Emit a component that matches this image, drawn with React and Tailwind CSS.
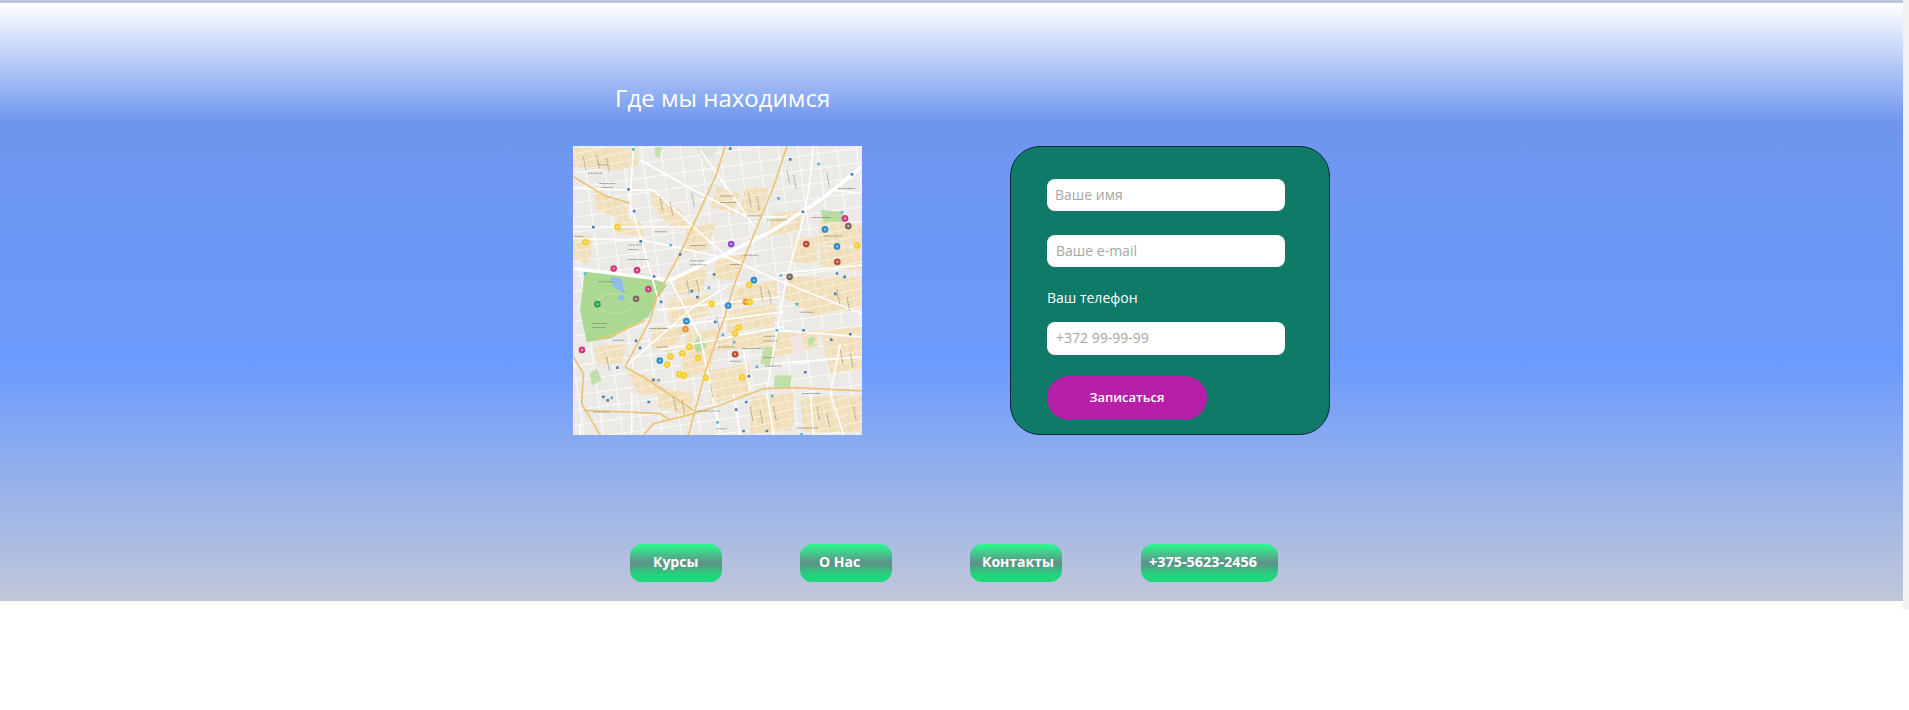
import React from "react";

const font = { fontFamily: '"Open Sans", sans-serif' };

// map coordinates follow a 866 unit square, offset by 39/48
const blocks = [
  "40,55 235,55 235,105 170,120 40,110",
  "100,180 200,225 205,275 110,240",
  "170,265 240,270 250,320 170,310",
  "40,310 95,320 90,400 40,390",
  "270,180 360,240 395,300 330,290 280,230",
  "470,170 540,190 520,250 450,230",
  "555,170 625,175 600,265 535,255",
  "640,250 730,240 720,300 620,320",
  "380,295 470,275 440,360 370,370",
  "470,385 555,370 530,450 455,445",
  "350,430 440,405 430,480 340,500",
  "700,320 775,320 770,400 695,395",
  "780,270 905,285 905,345 775,345",
  "780,350 905,355 905,420 780,410",
  "680,440 905,440 905,530 760,560 670,500",
  "530,470 650,450 650,510 515,530",
  "510,540 650,520 640,590 495,610",
  "320,510 450,490 440,560 330,580",
  "280,590 380,590 330,670 270,650",
  "380,600 480,600 450,720 360,750",
  "475,620 640,600 630,650 470,660",
  "640,610 780,600 770,650 640,680",
  "780,600 905,590 905,720 810,730",
  "200,720 290,745 330,800 230,790",
  "300,770 400,790 390,860 290,830",
  "450,720 570,700 570,790 450,820",
  "570,800 700,785 700,900 570,910",
  "720,800 905,795 905,905 730,905",
  "100,650 200,640 185,700 110,700",
];

const whiteRoads = [
  "905,110 780,210 640,300 500,370 330,450 40,415",
  "220,48 210,220 250,350 295,510",
  "40,290 200,290 390,290",
  "40,175 220,180 280,180 400,290 500,380 640,445 905,550",
  "760,48 745,180 720,300 680,440 650,600 620,780",
  "40,325 250,330 500,385",
  "330,450 420,620 480,914",
  "290,540 660,500",
  "320,590 670,545",
  "300,660 670,590",
  "195,710 400,530 500,470",
  "650,430 905,405",
  "650,600 905,620",
  "640,700 905,680",
  "550,660 570,780",
  "240,90 400,180 560,260 680,260",
  "420,60 470,130 590,300",
  "820,180 905,190",
  "60,880 60,914",
  "215,790 215,914",
  "520,790 540,914",
  "620,790 640,914",
  "750,790 760,914",
  "840,640 810,790 850,914",
];

const orangeRoads = [
  "495,48 470,130 420,240 360,370 290,500 270,570 195,710",
  "680,48 640,170 570,340 520,470 490,570 440,710 405,840 385,914",
  "905,782 700,772 610,775 480,825 400,850 280,880 250,914",
  "40,140 90,170 130,195 210,220",
  "40,680 70,730 65,820 100,880 120,914",
  "70,840 200,845 300,850 330,870",
  "195,710 250,740 400,840",
  "110,630 170,610 255,570",
];

const parks = [
  { points: "75,420 270,435 320,465 290,510 265,560 150,625 80,635 60,540", fill: "#acd992" },
  { points: "610,650 640,650 640,710 600,700", fill: "#c4dda8" },
  { points: "420,615 440,650 410,670 400,640", fill: "#b7dba0" },
  { points: "780,240 845,245 850,275 790,275", fill: "#b7dba0" },
  { points: "90,730 110,715 125,750 95,765", fill: "#bfe0a8" },
  { points: "645,735 695,735 690,770 640,770", fill: "#bfe0a8" },
  { points: "745,620 765,620 760,645 742,645", fill: "#bfe0a8" },
  { points: "285,50 305,50 300,80 285,80", fill: "#c5e0ae" },
  { points: "410,55 470,55 455,85 425,85", fill: "#dfe6d8" },
  { points: "695,620 720,605 735,660 700,670", fill: "#f2e4e4" },
];

const pins = [
  [172, 291, "#f7cf31"], [76, 336, "#f7cf31"], [513, 342, "#8a4fc0"], [854, 265, "#cf3d7e"],
  [864, 288, "#7b6a5e"], [794, 298, "#2b8fd0"], [738, 342, "#c04a3a"], [830, 349, "#2b8fd0"],
  [891, 346, "#f7cf31"], [831, 395, "#c04a3a"], [688, 440, "#7b6a5e"], [581, 450, "#2b8fd0"],
  [567, 464, "#f7cf31"], [161, 415, "#cf3d7e"], [231, 420, "#cf3d7e"], [265, 477, "#cf3d7e"],
  [228, 506, "#7b6a5e"], [112, 522, "#2f9e5a"], [455, 521, "#f7cf31"], [504, 526, "#2b8fd0"],
  [557, 515, "#ee9a2e"], [569, 516, "#f7cf31"], [379, 573, "#2b8fd0"], [376, 597, "#ee9a2e"],
  [534, 592, "#f7cf31"], [525, 610, "#f7cf31"], [66, 659, "#cf3d7e"], [525, 672, "#b5503c"],
  [388, 650, "#f7cf31"], [366, 669, "#f7cf31"], [331, 679, "#f7cf31"], [414, 683, "#f7cf31"],
  [299, 691, "#2b8fd0"], [321, 703, "#f7cf31"], [358, 732, "#f7cf31"], [371, 736, "#f7cf31"],
  [437, 742, "#f7cf31"], [546, 741, "#f7cf31"],
];

const stops = [
  [220, 58], [510, 56], [690, 88], [775, 102], [875, 133], [205, 178], [655, 205], [222, 243],
  [728, 245], [845, 247], [100, 291], [242, 334], [332, 345], [360, 373], [830, 430], [75, 431],
  [282, 439], [462, 433], [662, 436], [853, 440], [395, 483], [446, 473], [412, 501], [303, 515],
  [710, 522], [825, 491], [465, 575], [650, 600], [730, 600], [870, 612], [488, 614], [228, 632],
  [240, 653], [522, 636], [813, 628], [172, 712], [590, 710], [735, 726], [280, 749], [296, 750],
  [566, 738], [130, 800], [155, 803], [143, 810], [266, 815], [636, 797], [558, 815], [528, 838],
  [472, 876], [550, 902], [620, 902], [724, 912],
];

const labels = [
  [85, 130, 40], [118, 160, 50], [125, 172, 35], [205, 345, 40], [205, 358, 30], [205, 388, 60],
  [115, 455, 45], [95, 580, 50], [95, 592, 40], [285, 305, 35], [480, 198, 40], [480, 217, 50],
  [560, 258, 45], [620, 270, 60], [390, 346, 45], [390, 392, 40], [390, 404, 50], [550, 375, 45],
  [510, 403, 30], [835, 175, 50], [755, 262, 55], [790, 318, 55], [720, 546, 40], [475, 650, 50],
  [545, 655, 60], [510, 693, 35], [610, 618, 35], [610, 632, 45], [615, 708, 50], [725, 790, 55],
  [270, 595, 55], [290, 650, 35], [410, 842, 70], [100, 845, 50], [470, 895, 30], [710, 893, 65],
  [115, 105, 30], [45, 320, 25], [160, 630, 35], [610, 682, 30],
];

// small street names running along the blocks, drawn on a slant
const slantLabels = [
  [70, 80], [110, 75], [140, 85], [300, 200], [330, 215], [395, 190], [565, 190], [590, 200],
  [680, 120], [700, 135], [800, 130], [380, 450], [410, 450], [600, 470], [625, 480], [470, 560],
  [830, 480], [860, 500], [570, 830], [600, 840], [640, 830], [770, 830], [800, 850], [880, 830],
  [340, 800], [365, 810], [140, 680], [840, 660], [870, 670], [450, 760],
];

function MapPicture() {
  return (
    <svg viewBox="39 48 866 866" className="w-[289px] h-[289px] shrink-0 blur-[0.45px]">
      <defs>
        <pattern id="hatch" width="26" height="26" patternUnits="userSpaceOnUse" patternTransform="rotate(-12)">
          <rect width="26" height="26" fill="#f0dfba" />
          <rect width="26" height="3" fill="#f9f2e2" />
          <rect width="3" height="26" fill="#f6ead0" />
        </pattern>
        <pattern id="streets" width="58" height="44" patternUnits="userSpaceOnUse" patternTransform="rotate(-8)">
          <rect width="58" height="44" fill="#ebeae7" />
          <rect width="58" height="3" fill="#fbfbfa" />
          <rect width="3" height="44" fill="#fbfbfa" />
        </pattern>
      </defs>
      <rect x="39" y="48" width="866" height="866" fill="url(#streets)" />
      {blocks.map((p, i) => (
        <polygon key={i} points={p} fill="url(#hatch)" />
      ))}
      {parks.map((p, i) => (
        <polygon key={i} points={p.points} fill={p.fill} />
      ))}
      <path d="M150 440 L185 445 L195 490 L178 482 L160 470 Z" fill="#8fbce8" />
      <circle cx="184" cy="503" r="9" fill="#8fbce8" />
      <ellipse cx="165" cy="520" rx="55" ry="30" fill="none" stroke="#c6e6b4" strokeWidth="2" />
      {whiteRoads.map((p, i) => (
        <polyline key={i} points={p} fill="none" stroke="#ffffff" strokeWidth={i < 1 ? 11 : 5} />
      ))}
      {orangeRoads.map((p, i) => (
        <polyline key={i} points={p} fill="none" stroke="#edc47a" strokeWidth="5" />
      ))}
      {labels.map(([x, y, w], i) => (
        <line key={i} x1={x} y1={y} x2={x + w} y2={y} stroke="#77776f" strokeWidth="3" strokeDasharray="5 2" opacity="0.75" />
      ))}
      {slantLabels.map(([x, y], i) => (
        <line key={i} x1={x} y1={y} x2={x + 8} y2={y + 42} stroke="#77776f" strokeWidth="3" strokeDasharray="5 2" opacity="0.6" />
      ))}
      {stops.map(([x, y], i) => (
        <rect key={i} x={x - 4} y={y - 4} width="8" height="8" rx="1" fill={i % 3 === 0 ? "#55b6dc" : "#4f7fb8"} />
      ))}
      {pins.map(([x, y, c], i) => (
        <g key={i}>
          <circle cx={x} cy={y} r="10" fill={c} />
          <circle cx={x} cy={y} r="3" fill="#ffffff" opacity="0.65" />
        </g>
      ))}
    </svg>
  );
}

const navItems = [
  { label: "Курсы", className: "w-[92px] pl-[23px] pb-[4px] text-[14px]" },
  { label: "О Нас", className: "w-[92px] pl-[19px] pb-[4px] text-[14px]" },
  { label: "Контакты", className: "w-[92px] pl-[12px] pb-[4px] text-[14px]" },
  { label: "+375-5623-2456", className: "w-[137px] pl-[8px] pb-[2px] ml-px text-[14.4px]" },
];

const inputClass =
  "block w-[238px] bg-white rounded-[8px] text-[14px] text-gray-700 outline-none placeholder:text-[#a6a6a6]";

export default function App() {
  return (
    <div className="flex h-[710px] bg-white overflow-hidden" style={font}>
      <div className="w-[1903px] shrink-0">
        <section className="h-[601px] border-t-[3px] border-[#bcc6d9] bg-[linear-gradient(to_bottom,#ffffff_0%,#6e96ee_20%,#6b9bfd_60%,#c0c7d9_100%)]">
          <h2 className="ml-[615px] pt-[78px] text-[24px] leading-[34px] font-normal text-white">
            Где мы находимся
          </h2>

          <div className="ml-[573px] mt-[31px] flex gap-[148px] items-start">
            <MapPicture />

            <form className="w-[320px] h-[289px] rounded-[30px] border border-[#0b2a3f] bg-[#107a69] pl-[36px] pt-[32px]">
              <input className={`${inputClass} h-[32px] pl-[8px] pb-px`} placeholder="Ваше имя" />
              <input className={`${inputClass} h-[32px] pl-[9px] pb-px mt-[24px]`} placeholder="Ваше e-mail" />
              <label className="block mt-[21px] text-[14px] leading-[20px] text-white">Ваш телефон</label>
              <input className={`${inputClass} h-[33px] pl-[9px] pb-[3px] mt-[14px]`} placeholder="+372 99-99-99" />
              <button
                type="button"
                className="block w-[160px] h-[44px] mt-[21px] rounded-full bg-[#b71fa8] text-[13px] font-semibold text-white"
              >
                Записаться
              </button>
            </form>
          </div>

          <nav className="ml-[630px] mt-[109px] flex gap-[78px]">
            {navItems.map((item) => (
              <a
                key={item.label}
                className={`${item.className} h-[38px] flex items-center rounded-[12px] font-bold text-white whitespace-nowrap bg-[linear-gradient(to_bottom,#2bfb90_0%,#5f9088_50%,#1fd67c_82%,#1fd67c_100%)]`}
              >
                {item.label}
              </a>
            ))}
          </nav>
        </section>
      </div>
      <div className="w-[6px] h-[610px] bg-[#f1f1f1]" />
    </div>
  );
}
